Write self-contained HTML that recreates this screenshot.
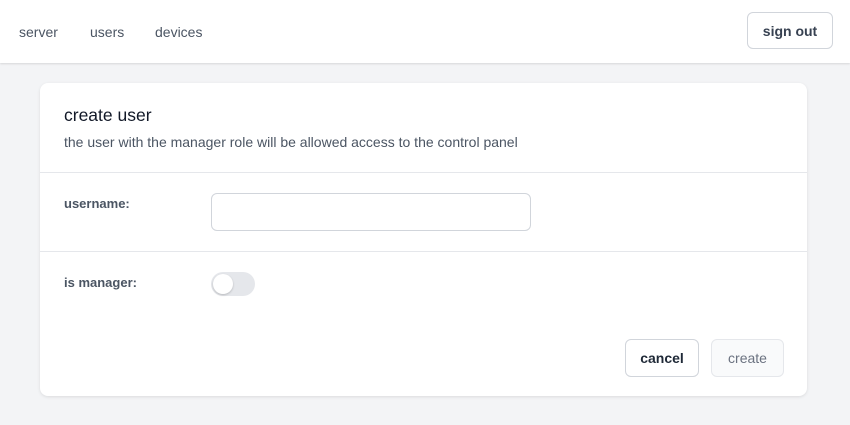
<!DOCTYPE html>
<html><head><style>
*{box-sizing:border-box;margin:0;padding:0}
body{width:850px;height:425px;background:#f3f4f6;font-family:"Liberation Sans",sans-serif;position:relative;overflow:hidden}
.top{position:absolute;left:0;top:0;width:850px;height:63px;background:#fff;box-shadow:0 1px 2px rgba(0,0,0,.12)}
.nav{position:absolute;top:24px;font-size:14px;color:#4b5563}
.btn{position:absolute;border:1px solid #d1d5db;border-radius:6px;background:#fff;font-size:14px;font-weight:bold;color:#374151;display:flex;align-items:center;justify-content:center}
.card{position:absolute;left:40px;top:83px;width:767px;height:313px;background:#fff;border-radius:8px;box-shadow:0 1px 3px rgba(0,0,0,.1)}
.hr{position:absolute;left:0;width:100%;height:1px;background:#e5e7eb}
.lbl{position:absolute;left:24px;font-size:13px;font-weight:bold;color:#4b5563}
</style></head><body>
<div class="top">
<span class="nav" style="left:19px">server</span>
<span class="nav" style="left:90px">users</span>
<span class="nav" style="left:155px">devices</span>
<div class="btn" style="left:747px;top:12px;width:86px;height:37px">sign out</div>
</div>
<div class="card">
<div style="position:absolute;left:24px;top:22px;font-size:17.5px;color:#111827">create user</div>
<div style="position:absolute;left:24px;top:51px;font-size:14px;color:#4b5563">the user with the manager role will be allowed access to the control panel</div>
<div class="hr" style="top:89px"></div>
<div class="lbl" style="top:113px">username:</div>
<div style="position:absolute;left:171px;top:110px;width:320px;height:38px;border:1px solid #d1d5db;border-radius:6px"></div>
<div class="hr" style="top:168px"></div>
<div class="lbl" style="top:192px">is manager:</div>
<div style="position:absolute;left:171px;top:189px;width:44px;height:24px;border-radius:12px;background:#e5e7eb"><div style="position:absolute;left:2px;top:2px;width:20px;height:20px;border-radius:50%;background:#fff;box-shadow:0 1px 2px rgba(0,0,0,.2)"></div></div>
<div class="btn" style="left:585px;top:256px;width:74px;height:38px;color:#1f2937">cancel</div>
<div class="btn" style="left:671px;top:256px;width:73px;height:38px;background:#f9fafb;border-color:#e5e7eb;color:#6b7280;font-weight:normal">create</div>
</div>
</body></html>
